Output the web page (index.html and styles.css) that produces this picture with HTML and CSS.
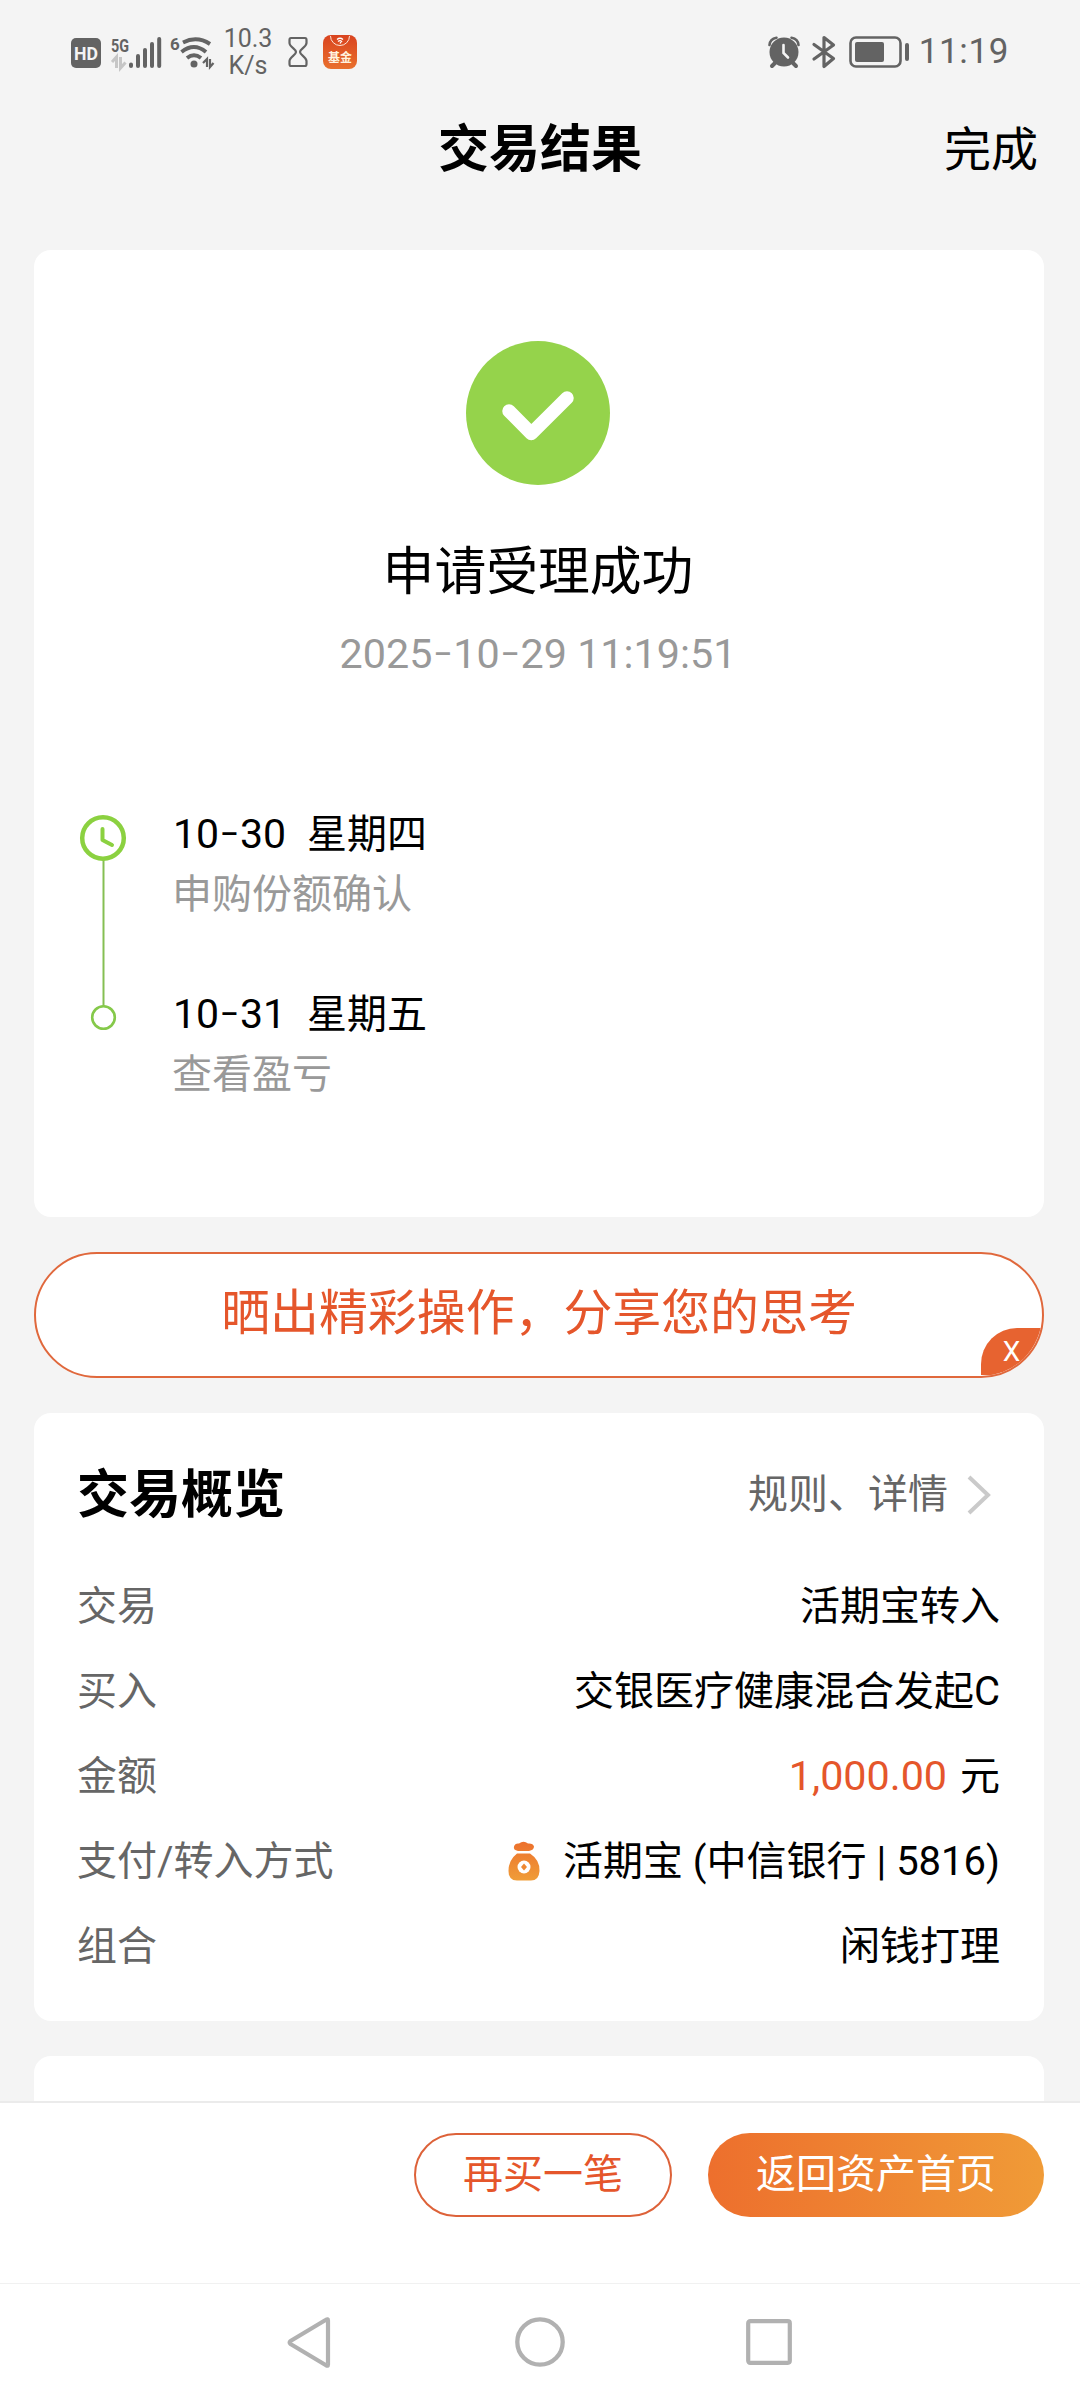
FILE: index.html
```html
<!DOCTYPE html>
<html lang="zh-CN">
<head>
<meta charset="utf-8">
<title>交易结果</title>
<link rel="stylesheet" href="styles.css">
</head>
<body>
<div class="screen">
  <div class="status">
    <div class="status-left">
      <svg class="hd" width="30" height="30" viewBox="0 0 30 30"><rect width="30" height="30" rx="5" fill="#636363"/><text x="15" y="21.5" text-anchor="middle" textLength="24" lengthAdjust="spacingAndGlyphs" font-size="18.5" font-weight="700" fill="#f4f4f4">HD</text></svg>
      <svg class="signal" width="52" height="34" viewBox="0 0 52 34">
        <text x="1" y="17" textLength="18" lengthAdjust="spacingAndGlyphs" font-size="19" font-weight="700" fill="#636363">5G</text>
        <path d="M2 27L6.500 22V33M10.500 22V33L15.500 27.500" fill="none" stroke="#c6c6c6" stroke-width="3"/>
        <path d="M21 29.500V31M28 21V31M35 15V31M42 9V31M49.200 4V31" stroke="#636363" stroke-width="4" stroke-linecap="round"/>
      </svg>
      <svg class="wifi" width="45" height="34" viewBox="0 0 45 34">
        <text x="0" y="15" font-size="17" font-weight="700" fill="#636363">6</text>
        <path d="M13 7.500Q27 .5 40 9M11.500 17Q24 7 36 17M17 23Q24 17.500 31 23" fill="none" stroke="#636363" stroke-width="3.900"/>
        <circle cx="24" cy="29" r="3.500" fill="#636363"/>
        <path d="M33 28L37 24V32M40 24V32L43.500 28" fill="none" stroke="#636363" stroke-width="2.200"/>
      </svg>
      <div class="speed">10.3<br>K/s</div>
      <svg class="glass" width="20" height="32" viewBox="0 0 20 32"><path d="M3 2H17Q18.500 2 18.500 4V7C18.500 11 12 13 12 16S18.500 21 18.500 25V28Q18.500 30 17 30H3Q1.500 30 1.500 28V25C1.500 21 8 19 8 16S1.500 11 1.500 7V4Q1.500 2 3 2Z" fill="none" stroke="#636363" stroke-width="2.200"/></svg>
      <svg class="app" width="34" height="34" viewBox="0 0 34 34">
        <defs><linearGradient id="appfill" x1="0" y1="0" x2="0" y2="1"><stop offset="0" stop-color="#d9431f"/><stop offset="1" stop-color="#e9702d"/></linearGradient></defs>
        <rect width="34" height="34" rx="8" fill="url(#appfill)"/>
        <path d="M7.500 1A9.500 9.500 0 0 0 26.500 1" fill="none" stroke="#fbe6d8" stroke-width="1"/>
        <path d="M14 4.500Q17 2 20 4.500M15 6.500Q17.500 4.500 19 7M17 8.500L18 7" fill="none" stroke="#fff" stroke-width="1.300"/>
        <text x="17" y="26.500" text-anchor="middle" font-size="12" font-weight="700" fill="#fff3df">基金</text>
      </svg>
    </div>
    <div class="status-right">
      <svg width="32" height="32" viewBox="0 0 32 32">
        <circle cx="16" cy="16" r="14.500" fill="#636363"/>
        <path d="M1.500 9Q2 3 8.500 1.800M23.500 1.800Q30 3 30.500 9" fill="none" stroke="#636363" stroke-width="2.600" stroke-linecap="round"/>
        <path d="M7 27L4 30M25 27L28 30" stroke="#636363" stroke-width="4" stroke-linecap="round"/>
        <path d="M15.500 9V17L20 21.500" fill="none" stroke="#f4f4f4" stroke-width="2.600" stroke-linecap="round"/>
      </svg>
      <svg class="bt" width="24" height="34" viewBox="0 0 24 34"><path d="M2 9.500L21.500 23.500L12 31.500V2.500L21.500 10L2 24" fill="none" stroke="#636363" stroke-width="3.200" stroke-linecap="round" stroke-linejoin="round"/></svg>
      <svg class="batt" width="60" height="32" viewBox="0 0 60 32"><rect x="1.500" y="1.500" width="50" height="29" rx="5.500" fill="none" stroke="#636363" stroke-width="2.600"/><rect x="6" y="6" width="29" height="20" rx="2" fill="#636363"/><rect x="56" y="7" width="4" height="18" rx="2" fill="#636363"/></svg>
      <span class="clock">11:19</span>
    </div>
  </div>

  <header class="nav">
    <h1>交易结果</h1>
    <span class="done">完成</span>
  </header>

  <main class="content">
    <section class="card result">
      <svg class="tick" width="144" height="144" viewBox="0 0 144 144"><circle cx="72" cy="72" r="72" fill="#95d34b"/><path d="M43 70L65.300 92.500L101 57" fill="none" stroke="#fff" stroke-width="13.500" stroke-linecap="round" stroke-linejoin="round"/></svg>
      <div class="result-title">申请受理成功</div>
      <div class="result-time">2025<i>-</i>10<i>-</i>29 11:19:51</div>
      <div class="timeline">
        <svg width="48" height="218" viewBox="0 0 48 218">
          <path d="M24.500 46V192" stroke="#85bf52" stroke-width="2"/>
          <circle cx="24" cy="24" r="20.800" fill="#fff" stroke="#8bd140" stroke-width="4.500"/>
          <path d="M23.500 15V26L33 31" fill="none" stroke="#8bd140" stroke-width="4" stroke-linecap="round" stroke-linejoin="round"/>
          <circle cx="24.500" cy="203.500" r="11.300" fill="#fff" stroke="#85c94a" stroke-width="2.600"/>
        </svg>
        <div class="steps">
          <div class="step">
            <div class="when"><span class="num">10<i>-</i>30</span><span>星期四</span></div>
            <div class="what">申购份额确认</div>
          </div>
          <div class="step">
            <div class="when"><span class="num">10<i>-</i>31</span><span>星期五</span></div>
            <div class="what">查看盈亏</div>
          </div>
        </div>
      </div>
    </section>

    <section class="share">
      晒出精彩操作，分享您的思考
      <span class="close">X</span>
    </section>

    <section class="card summary">
      <div class="summary-head">
        <h2>交易概览</h2>
        <span class="more">规则、详情<svg width="24" height="40" viewBox="0 0 24 40"><path d="M2 2L21 20L2 38" fill="none" stroke="#cacaca" stroke-width="4"/></svg></span>
      </div>
      <div class="row"><span class="label">交易</span><span>活期宝转入</span></div>
      <div class="row"><span class="label">买入</span><span>交银医疗健康混合发起C</span></div>
      <div class="row"><span class="label">金额</span><span><b class="amount">1,000.00</b> 元</span></div>
      <div class="row"><span class="label">支付/转入方式</span><span class="pay">
        <svg width="32" height="40" viewBox="0 0 32 40">
          <defs><linearGradient id="bag" x1="0" y1="0" x2="0" y2="1"><stop offset="0" stop-color="#ec702d"/><stop offset="1" stop-color="#f09d38"/></linearGradient></defs>
          <path d="M10 10Q5 9 6 5.500Q7 2 11 2.500Q15.500-1 20 2.500Q25 2 26 5.500Q26 9 21 10ZM9 12.500H22Q32 19 31.500 30Q31 39.500 23 39.500H9Q.5 39.500 .5 30Q.5 19 9 12.500Z" fill="url(#bag)"/>
          <circle cx="16" cy="26" r="6.500" fill="#fff"/><path d="M16 22.500L19 26L16 29.500L13 26Z" fill="#ee8833"/>
        </svg>活期宝 (中信银行 | 5816)</span></div>
      <div class="row"><span class="label">组合</span><span>闲钱打理</span></div>
    </section>

    <section class="card next"></section>
  </main>

  <footer class="actions">
    <button class="btn outline">再买一笔</button>
    <button class="btn solid">返回资产首页</button>
  </footer>

  <div class="sysnav">
    <svg width="44" height="51" viewBox="0 0 44 51"><path d="M41 3.500Q41 1.500 39 2.800L3.500 24Q2 25.500 3.500 27L39 48.200Q41 49.500 41 47.500Z" fill="none" stroke="#b1b1b1" stroke-width="4.200" stroke-linejoin="round"/></svg>
    <svg class="home" width="50" height="50" viewBox="0 0 50 50"><circle cx="25" cy="25" r="22.700" fill="none" stroke="#b1b1b1" stroke-width="4.300"/></svg>
    <svg width="46" height="46" viewBox="0 0 46 46"><rect x="2.200" y="2.200" width="41.600" height="41.600" rx="2" fill="none" stroke="#b1b1b1" stroke-width="4.200"/></svg>
  </div>
</div>
</body>
</html>
```

FILE: styles.css
```css
* { box-sizing: border-box; }
body {
  margin: 0;
  background: #f4f4f4;
  color: #000;
  font-family: Roboto, "Noto Sans CJK SC", sans-serif;
  font-size: 40px;
}
svg { display: block; flex: none; overflow: visible; }
i {
  font-family: Inter, sans-serif;
  font-style: normal;
  font-weight: 300;
  font-size: 46px;
  line-height: 1px;
}
h1, h2 { margin: 0; font-weight: 700; font-size: 52px; }

.screen {
  width: 1080px;
  height: 2400px;
  display: flex;
  flex-direction: column;
  overflow: hidden;
}

/* system status bar */
.status {
  height: 104px;
  flex: none;
  display: flex;
  justify-content: space-between;
  padding: 0 71px;
  align-items: center;
}
.status-left, .status-right { display: flex; align-items: center; }
.hd { margin: 2px 9px 0 0; }
.signal { margin-right: 8px; }
.speed {
  width: 50px;
  margin: 0 15px 0 8px;
  text-align: center;
  font-size: 25px;
  line-height: 27px;
  color: #636363;
}
.app { margin: 0 0 0 15px; }
.bt { margin: 0 13px 0 12px; }
.clock {
  margin-left: 10px;
  font-size: 35px;
  line-height: 42px;
  letter-spacing: .6px;
  color: #636363;
}

/* page title */
.nav {
  height: 91px;
  flex: none;
  display: grid;
  grid-template-columns: 1fr auto 1fr;
  align-items: center;
  padding-right: 42px;
  padding-left: 42px;
}
.nav h1 { grid-column: 2; font-size: 51px; line-height: 60px; }
.done { justify-self: end; font-size: 47px; line-height: 60px; }

.content {
  flex: none;
  height: 1906px;
  padding: 55px 36px 0 34px;
  overflow: hidden;
}
.card { background: #fff; border-radius: 17px; }

/* result */
.result { height: 967px; padding: 91px 45px 0 43px; }
.tick { margin: 0 auto; }
.result-title {
  margin-top: 58px;
  text-align: center;
  font-size: 51.800px;
  line-height: 60px;
}
.result-time {
  margin-top: 26px;
  text-align: center;
  font-size: 41.300px;
  line-height: 50px;
  color: #999;
}
.timeline { display: flex; margin-top: 135px; padding-left: 2px; }
.steps { padding-left: 45px; }
.step { height: 180px; }
.when { display: flex; gap: 22px; height: 42px; line-height: 42px; white-space: nowrap; }
.num { width: 113px; padding-left: 1px; font-size: 41px; line-height: 40px; }
.what { margin-top: 18px; line-height: 42px; color: #999; }

/* share banner */
.share {
  position: relative;
  height: 126px;
  margin: 35px 0;
  border: 2px solid #e0683c;
  border-radius: 64px;
  background: #fff;
  text-align: center;
  font-size: 48.900px;
  line-height: 119px;
  color: #e5562b;
  overflow: hidden;
}
.close {
  position: absolute;
  right: 0;
  bottom: 1px;
  width: 61px;
  height: 47px;
  border-top-left-radius: 36px;
  background: #e76330;
  color: #fff;
  font-size: 28px;
  line-height: 47px;
}

/* summary */
.summary { height: 608px; padding: 51px 44px 0 43px; }
.summary-head {
  display: flex;
  justify-content: space-between;
  height: 60px;
  margin-bottom: 40px;
}
.summary-head h2 { line-height: 64px; }
.more {
  display: flex;
  gap: 19px;
  height: 64px;
  margin-right: 9px;
  line-height: 62px;
  color: #666;
}
.more svg { margin-top: 11px; }
.row { display: flex; justify-content: space-between; height: 85px; line-height: 85px; }
.label { color: #666; }
.amount { font-weight: 400; font-size: 41.300px; color: #e5562b; margin-right: 3px; }
.pay { display: flex; align-items: center; gap: 23px; }
.pay svg { margin-bottom: 2px; }
.next { height: 200px; margin-top: 35px; }

/* bottom actions */
.actions {
  height: 182px;
  flex: none;
  display: flex;
  justify-content: flex-end;
  gap: 36px;
  padding: 30px 36px 0;
  border-top: 2px solid #ebebeb;
  background: #fff;
}
.btn {
  height: 84px;
  padding: 0 0 9px;
  border: 0;
  border-radius: 42px;
  font: inherit;
}
.outline { width: 258px; border: 2px solid #dd6239; background: #fff; color: #e5562b; }
.solid { width: 336px; background: linear-gradient(90deg, #ed6f2d, #f09b37); color: #fff; }

/* system navigation */
.sysnav {
  flex: 1;
  display: flex;
  align-items: center;
  justify-content: space-between;
  padding: 0 288px 0 287px;
  border-top: 1px solid #f1f1f1;
  background: #fff;
}
.home { margin-left: 2px; }
```
